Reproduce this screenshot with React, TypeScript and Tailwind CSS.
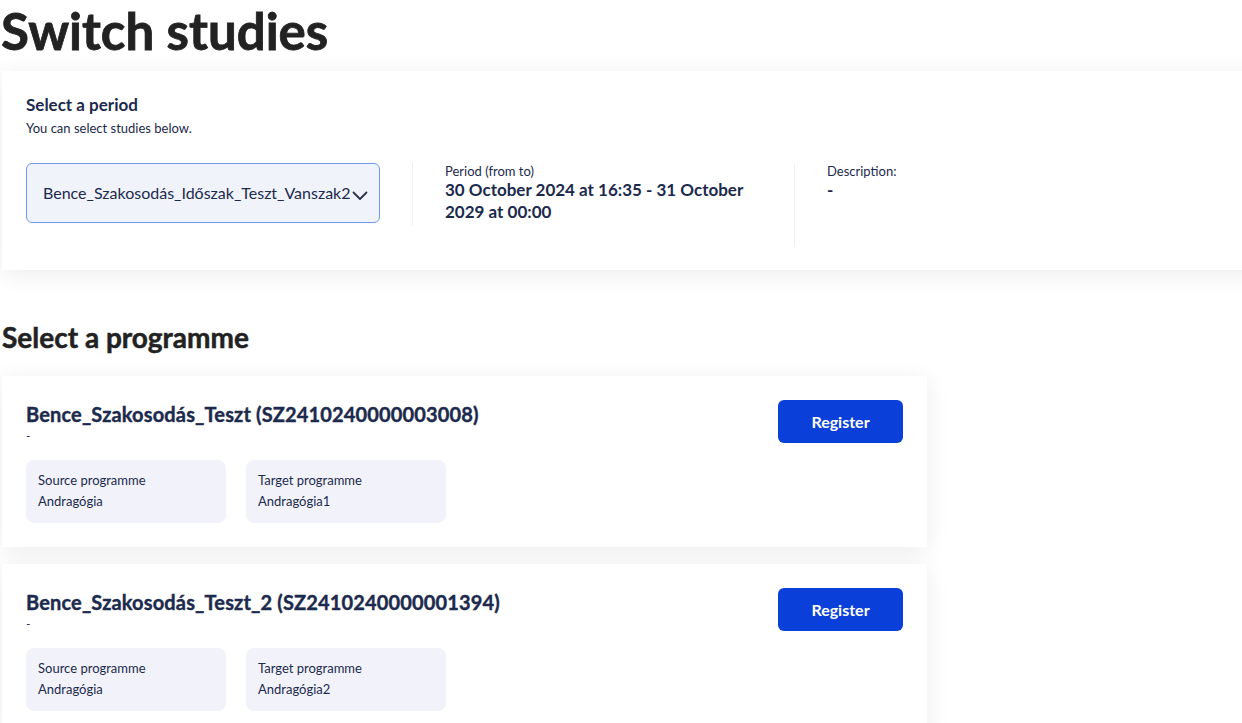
import React from "react";

const lato = { fontFamily: "Lato, 'Noto Sans', sans-serif" };

function ProgrammeCard({ title, target }: { title: string; target: string }) {
  return (
    <div className="w-[925px] bg-white shadow-[0_4px_22px_rgba(0,0,0,0.08)] px-6 pt-6 pb-6 flex justify-between">
      <div className="flex flex-col">
        <div className="text-[20px] leading-[28px] font-bold tracking-[0.15px] [-webkit-text-stroke:0.4px_#1c2a4d] text-[#1c2a4d]">{title}</div>
        <div className="text-[12px] leading-[16px] text-[#1c2a4d]">-</div>
        <div className="flex gap-5 mt-[16px]">
          <div className="w-[200px] h-[63px] rounded-lg bg-[#f2f3fa] px-3 pt-[10px] text-[13px] leading-[21px] text-[#1c2a4d]">
            <div>Source programme</div>
            <div>Andragógia</div>
          </div>
          <div className="w-[200px] h-[63px] rounded-lg bg-[#f2f3fa] px-3 pt-[10px] text-[13px] leading-[21px] text-[#1c2a4d]">
            <div>Target programme</div>
            <div>{target}</div>
          </div>
        </div>
      </div>
      <button className="w-[125px] h-[43px] rounded-md bg-[#0b3fd9] text-white text-[16px] font-bold">
        Register
      </button>
    </div>
  );
}

export default function App() {
  return (
    <div style={lato} className="w-[1242px] h-[723px] overflow-hidden bg-white pl-[2px]">
      <h1 className="text-[51px] leading-[61px] font-bold [-webkit-text-stroke:0.8px_#222222] text-[#222222] -ml-[1px]">Switch studies</h1>
      <div className="mt-[10px] w-[1260px] bg-white shadow-[0_4px_22px_rgba(0,0,0,0.08)] px-6 pt-6 pb-[23px]">
        <div className="text-[17px] leading-[20px] font-bold text-[#1c2a4d]">Select a period</div>
        <div className="mt-[5px] text-[13px] leading-[16px] text-[#1c2a4d]">You can select studies below.</div>
        <div className="mt-[27px] flex items-start">
          <div className="relative w-[354px] h-[60px] rounded-md border border-[#6b9af0] bg-[#f1f3fb] flex items-center pl-4 pr-7 overflow-hidden">
            <span className="text-[16px] text-[#1c2a4d] whitespace-nowrap">Bence_Szakosodás_Időszak_Teszt_Vanszak2</span>
            <svg className="absolute right-[11px] top-[27px]" width="16" height="10" viewBox="0 0 16 10" fill="none">
              <path d="M1.5 1.5 L8 8 L14.5 1.5" stroke="#2b3348" strokeWidth="1.8" strokeLinecap="round" strokeLinejoin="round" />
            </svg>
          </div>
          <div className="ml-8 w-[382px] border-l border-[#eef0f7] pl-8 pr-8 pb-[2px]">
            <div className="text-[13px] leading-[16px] text-[#1c2a4d]">Period (from to)</div>
            <div className="text-[17px] leading-[22px] font-bold text-[#1c2a4d]">30 October 2024 at 16:35 - 31 October 2029 at 00:00</div>
          </div>
          <div className="h-[84px] border-l border-[#eef0f7] pl-8">
            <div className="text-[13px] leading-[16px] text-[#1c2a4d]">Description:</div>
            <div className="text-[17px] leading-[22px] font-bold text-[#1c2a4d]">-</div>
          </div>
        </div>
      </div>
      <h2 className="mt-[51px] mb-[23px] text-[28px] leading-[32px] font-bold [-webkit-text-stroke:0.5px_#222222] text-[#222222]">Select a programme</h2>
      <div className="flex flex-col gap-[17px]">
        <ProgrammeCard title="Bence_Szakosodás_Teszt (SZ2410240000003008)" target="Andragógia1" />
        <ProgrammeCard title="Bence_Szakosodás_Teszt_2 (SZ2410240000001394)" target="Andragógia2" />
      </div>
    </div>
  );
}
